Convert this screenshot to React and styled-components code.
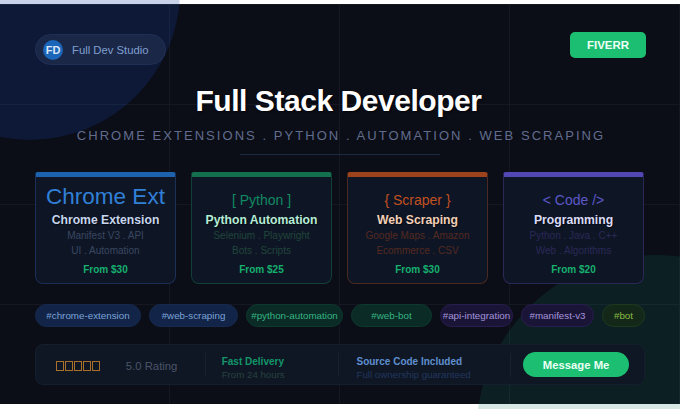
import styled, { createGlobalStyle } from 'styled-components';

const GlobalStyle = createGlobalStyle`
  html, body {
    margin: 0;
    padding: 0;
    background: #fff;
  }
  * {
    box-sizing: border-box;
  }
`;

const Stage = styled.div`
  position: relative;
  width: 680px;
  height: 409px;
  padding: 4px 0 5px;
  overflow: hidden;
  background: #fff;
  font-family: "Liberation Sans", Arial, sans-serif;
`;

const Canvas = styled.div`
  display: flex;
  flex-direction: column;
  height: 400px;
  padding: 28px 35px 0;
  background-color: #0b0d17;
  background-image:
    linear-gradient(to right, transparent 169px, #151823 169px, #151823 170px),
    linear-gradient(to bottom, transparent 99px, #151823 99px, #151823 100px);
  background-size: 170px 100px;
  background-position: 0 1px;
`;

/* translucent blobs, they spill over the white strips too */
const Blob = styled.div`
  position: absolute;
  border-radius: 50%;
  pointer-events: none;
  left: ${(p) => p.$left}px;
  top: ${(p) => p.$top}px;
  width: ${(p) => p.$size}px;
  height: ${(p) => p.$size}px;
  background: ${(p) => p.$color};
`;

const TopRow = styled.div`
  position: relative;
  display: flex;
  justify-content: space-between;
  align-items: flex-start;
  height: 46px;
  margin-right: -1px;
`;

const Brand = styled.div`
  display: flex;
  align-items: center;
  gap: 9px;
  width: 131px;
  height: 31px;
  margin-top: 2px;
  padding-left: 7px;
  border-radius: 16px;
  border: 1px solid #1f2f55;
  background: #1b2747;
`;

const BrandMark = styled.div`
  display: flex;
  align-items: center;
  justify-content: center;
  width: 20px;
  height: 20px;
  border-radius: 50%;
  background: #1b66b8;
  color: #dbe7f7;
  font-size: 11px;
  font-weight: 700;
`;

const BrandName = styled.span`
  color: #7f9fd0;
  font-size: 11.3px;
`;

const FiverrBadge = styled.div`
  display: flex;
  align-items: center;
  justify-content: center;
  width: 76px;
  height: 26px;
  border-radius: 5px;
  background: #1cbf72;
  color: #f0fff8;
  font-size: 11.5px;
  font-weight: 700;
`;

const Title = styled.h1`
  position: relative;
  margin: 4px 0 0;
  padding-right: 3px;
  text-align: center;
  color: #fff;
  font-size: 30px;
  line-height: 38px;
  font-weight: 700;
  letter-spacing: -0.45px;
  text-shadow: 1px 1px 2px rgba(0, 0, 0, 0.7);
`;

const Subtitle = styled.div`
  position: relative;
  margin-top: 8px;
  padding-left: 2px;
  text-align: center;
  color: #626d8e;
  font-size: 13px;
  line-height: 16px;
  letter-spacing: 2.05px;
`;

const Rule = styled.div`
  position: relative;
  width: 200px;
  height: 1px;
  margin: 10px auto 0;
  background: #1c2a44;
`;

const CardRow = styled.div`
  position: relative;
  display: grid;
  grid-template-columns: repeat(4, 141px);
  justify-content: space-between;
  margin-top: 17px;
  width: 609px;
`;

const Card = styled.div`
  display: flex;
  flex-direction: column;
  align-items: center;
  height: 112px;
  border: 1px solid ${(p) => p.$border};
  border-top: 5px solid ${(p) => p.$accent};
  border-radius: 3px 3px 8px 8px;
  background: #0e1626;
  overflow: hidden;
`;

const CardIcon = styled.div`
  height: 36px;
  padding-top: ${(p) => p.$top}px;
  color: ${(p) => p.$color};
  font-size: ${(p) => p.$size}px;
  line-height: 20px;
  white-space: nowrap;
`;

const CardTitle = styled.div`
  color: ${(p) => p.$color};
  font-size: 12.2px;
  line-height: 15px;
  font-weight: 700;
  text-shadow: 1px 1px 1px rgba(0, 0, 0, 0.6);
`;

const CardLine = styled.div`
  color: ${(p) => p.$color};
  font-size: 10px;
  line-height: 15px;
  &:first-of-type {
    margin-top: 1px;
  }
`;

const Price = styled.div`
  margin-top: 5px;
  color: #16b06e;
  font-size: 10px;
  line-height: 13px;
  font-weight: 700;
`;

const TagRow = styled.div`
  position: relative;
  display: flex;
  justify-content: space-between;
  margin-top: 20px;
  width: 610px;
`;

const Tag = styled.div`
  display: flex;
  align-items: center;
  justify-content: center;
  width: ${(p) => p.$width}px;
  height: 23px;
  border-radius: 12px;
  border: 1px solid ${(p) => p.$border};
  background: ${(p) => p.$bg};
  color: ${(p) => p.$color};
  font-size: 9.8px;
  white-space: nowrap;
`;

const Footer = styled.div`
  position: relative;
  display: flex;
  align-items: center;
  width: 610px;
  height: 41px;
  margin-top: 17px;
  padding: 0 15px 0 20px;
  border: 1px solid #141f2d;
  border-radius: 8px;
  background: #0f1724;
`;

const Stars = styled.div`
  display: flex;
  gap: 1px;
  width: 70px;
  margin-top: 3px;
`;

const StarBox = styled.span`
  width: 8px;
  height: 10px;
  border: 1px solid #a8702a;
`;

const Rating = styled.span`
  width: 79px;
  margin-top: 3px;
  color: #4a5468;
  font-size: 11.3px;
`;

const Divider = styled.div`
  flex: none;
  width: 1px;
  height: 24px;
  background: #18222f;
`;

const Info = styled.div`
  display: flex;
  flex-direction: column;
  gap: 1px;
  width: ${(p) => p.$width}px;
  margin-top: 8px;
  padding-left: ${(p) => p.$indent}px;
`;

const InfoTitle = styled.div`
  color: ${(p) => p.$color};
  font-size: 10px;
  line-height: 12px;
  font-weight: 700;
  white-space: nowrap;
`;

const InfoText = styled.div`
  color: ${(p) => p.$color};
  font-size: 9.7px;
  line-height: 12px;
  white-space: nowrap;
`;

const MessageButton = styled.button`
  margin-left: 12px;
  width: 106px;
  height: 25px;
  padding: 0;
  border: 0;
  border-radius: 13px;
  background: #1cbf72;
  color: #eafff4;
  font-family: inherit;
  font-size: 11.3px;
  font-weight: 700;
`;

const cards = [
  { icon: 'Chrome Ext', size: 22.5, top: 10, accent: '#1c62ad', border: '#1c2f55', color: '#3180d8', titleColor: '#c7d6ee', title: 'Chrome Extension', lines: ['Manifest V3 . API', 'UI . Automation'], textColor: '#3a4660', price: 'From $30' },
  { icon: '[ Python ]', size: 14, top: 13, accent: '#12704f', border: '#123f38', color: '#128a62', titleColor: '#b5ecd6', title: 'Python Automation', lines: ['Selenium . Playwright', 'Bots . Scripts'], textColor: '#204539', price: 'From $25' },
  { icon: '{ Scraper }', size: 14, top: 13, accent: '#9c431c', border: '#4a2a20', color: '#c2501f', titleColor: '#f3d0b8', title: 'Web Scraping', lines: ['Google Maps . Amazon', 'Ecommerce . CSV'], textColor: '#55291f', price: 'From $30' },
  { icon: '< Code />', size: 14, top: 13, accent: '#5247b5', border: '#2b2757', color: '#5d57c8', titleColor: '#dcdcf8', title: 'Programming', lines: ['Python . Java . C++', 'Web . Algorithms'], textColor: '#2b2856', price: 'From $20' },
];

const blue = { $bg: '#122447', $border: '#16294e', $color: '#7ba3da' };
const green = { $bg: '#0a2b26', $border: '#0d3a2c', $color: '#35b582' };
const purple = { $bg: '#1a1436', $border: '#2a1d50', $color: '#a595dc' };

const tags = [
  { label: '#chrome-extension', $width: 106, ...blue },
  { label: '#web-scraping', $width: 89, ...blue },
  { label: '#python-automation', $width: 97, ...green },
  { label: '#web-bot', $width: 81, ...green },
  { label: '#api-integration', $width: 73, ...purple },
  { label: '#manifest-v3', $width: 73, ...purple },
  { label: '#bot', $width: 43, $bg: '#14281a', $border: '#1d3a1c', $color: '#8bbb40' },
];

const App = () => {
  return (
    <Stage>
      <GlobalStyle />
      <Canvas>
        <Blob $left={-120} $top={-160} $size={300} $color="rgba(26, 67, 159, 0.24)" />
        <Blob $left={476} $top={255} $size={360} $color="rgba(16, 125, 100, 0.176)" />
        <TopRow>
          <Brand>
            <BrandMark>FD</BrandMark>
            <BrandName>Full Dev Studio</BrandName>
          </Brand>
          <FiverrBadge>FIVERR</FiverrBadge>
        </TopRow>
        <Title>Full Stack Developer</Title>
        <Subtitle>CHROME EXTENSIONS . PYTHON . AUTOMATION . WEB SCRAPING</Subtitle>
        <Rule />
        <CardRow>
          {cards.map((c) => (
            <Card key={c.title} $accent={c.accent} $border={c.border}>
              <CardIcon $color={c.color} $size={c.size} $top={c.top}>{c.icon}</CardIcon>
              <CardTitle $color={c.titleColor}>{c.title}</CardTitle>
              {c.lines.map((l) => (
                <CardLine key={l} $color={c.textColor}>{l}</CardLine>
              ))}
              <Price>{c.price}</Price>
            </Card>
          ))}
        </CardRow>
        <TagRow>
          {tags.map(({ label, ...rest }) => (
            <Tag key={label} {...rest}>{label}</Tag>
          ))}
        </TagRow>
        <Footer>
          <Stars>
            <StarBox /><StarBox /><StarBox /><StarBox /><StarBox />
          </Stars>
          <Rating>5.0 Rating</Rating>
          <Divider />
          <Info $width={133} $indent={16}>
            <InfoTitle $color="#12966a">Fast Delivery</InfoTitle>
            <InfoText $color="#27423f">From 24 hours</InfoText>
          </Info>
          <Divider />
          <Info $width={171} $indent={17}>
            <InfoTitle $color="#5f8fcf">Source Code Included</InfoTitle>
            <InfoText $color="#22365f">Full ownership guaranteed</InfoText>
          </Info>
          <Divider />
          <MessageButton>Message Me</MessageButton>
        </Footer>
      </Canvas>
    </Stage>
  );
};

export default App;
